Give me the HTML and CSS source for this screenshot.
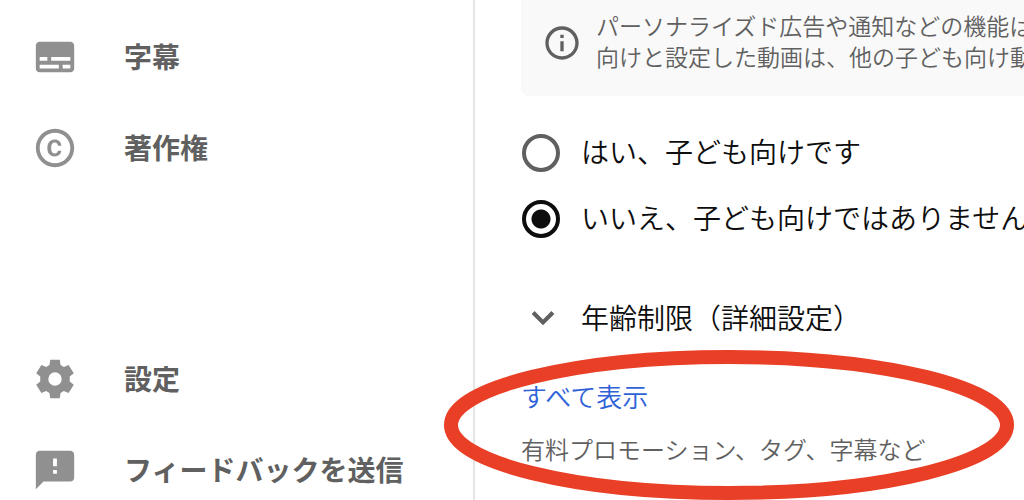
FILE: index.html
```html
<!DOCTYPE html>
<html lang="ja">
<head>
  <meta charset="UTF-8">
  <meta name="viewport" content="width=device-width, initial-scale=1">
  <title>動画の詳細</title>
  <link rel="stylesheet" href="styles.css">
</head>
<body>

  <!-- サイドメニュー -->
  <nav class="sidebar">
    <div class="menu">
      <a class="menu-item" href="#subtitles">
        <svg class="icon" viewBox="0 0 24 24"><path d="M20 4H4c-1.100 0-2 .9-2 2v12c0 1.100.9 2 2 2h16c1.100 0 2-.9 2-2V6c0-1.100-.9-2-2-2zM4 12h4v2H4v-2zm10 6H4v-2h10v2zm6 0h-4v-2h4v2zm0-4H10v-2h10v2z"/></svg>
        <span>字幕</span>
      </a>
      <a class="menu-item" href="#copyright">
        <svg class="icon" viewBox="0 0 24 24"><path d="M10.080 10.860c.05-.33.16-.62.300-.87s.34-.46.590-.62c.24-.15.54-.22.910-.23.230.01.440.05.630.13.200.09.380.21.520.36s.25.33.340.53.130.42.140.64h1.790c-.02-.47-.11-.900-.280-1.290s-.400-.73-.700-1.010-.660-.500-1.080-.660-.880-.230-1.390-.230c-.650 0-1.220.11-1.700.34s-.880.53-1.200.92-.560.84-.710 1.360S8 11.290 8 11.870v.27c0 .58.08 1.120.230 1.640s.39.970.710 1.350.72.690 1.200.91 1.050.34 1.700.34c.47 0 .91-.08 1.320-.230s.77-.36 1.080-.630.56-.58.740-.940.29-.740.300-1.150h-1.790c-.01.210-.06.400-.150.580s-.21.33-.360.460-.32.230-.520.300c-.19.07-.39.09-.600.10-.360-.01-.660-.08-.890-.230-.250-.160-.450-.370-.590-.620s-.250-.550-.300-.880-.080-.670-.080-1v-.27c0-.350.030-.680.080-1.010zM12 2C6.480 2 2 6.480 2 12s4.480 10 10 10 10-4.480 10-10S17.520 2 12 2zm0 18c-4.410 0-8-3.590-8-8s3.590-8 8-8 8 3.590 8 8-3.590 8-8 8z"/></svg>
        <span>著作権</span>
      </a>
    </div>
    <div class="menu">
      <a class="menu-item" href="#settings">
        <svg class="icon" viewBox="0 0 24 24"><path fill-rule="evenodd" d="M9.500 2h5l.400 2.700 1.700 1 2.500-1 2.700 4.300-2.100 1.700v2.600l2.100 1.700-2.700 4.300-2.500-1-1.700 1-.400 2.700h-5l-.400-2.700-1.700-1-2.500 1L2.200 15l2.100-1.700v-2.600L2.200 9l2.700-4.300 2.500 1 1.700-1zM12 8.500a3.500 3.500 0 1 0 0 7 3.500 3.500 0 0 0 0-7z"/></svg>
        <span>設定</span>
      </a>
      <a class="menu-item" href="#feedback">
        <svg class="icon" viewBox="0 0 24 24"><path d="M20 2H4c-1.100 0-2 .9-2 2v18l4-4h14c1.100 0 2-.9 2-2V4c0-1.100-.9-2-2-2zm-7 12h-2v-2h2v2zm0-4h-2V6h2v4z"/></svg>
        <span>フィードバックを送信</span>
      </a>
    </div>
  </nav>

  <!-- 視聴者の設定 -->
  <main class="content">
    <div class="notice">
      <svg class="notice-icon" viewBox="0 0 24 24"><path d="M11 7h2v2h-2zm0 4h2v6h-2zm1-9C6.480 2 2 6.480 2 12s4.480 10 10 10 10-4.480 10-10S17.520 2 12 2zm0 18c-4.410 0-8-3.590-8-8s3.590-8 8-8 8 3.590 8 8-3.590 8-8 8z"/></svg>
      <p>パーソナライズド広告や通知などの機能は<br>向けと設定した動画は、他の子ども向け動</p>
    </div>

    <form class="audience">
      <label class="option"><input type="radio" name="kids" value="yes"><span>はい、子ども向けです</span></label>
      <label class="option"><input type="radio" name="kids" value="no" checked><span>いいえ、子ども向けではありません</span></label>
    </form>

    <button class="expander" type="button">
      <svg class="chevron" viewBox="0 0 24 24"><path d="M7.410 8.200 12 12.800l4.590-4.600L18.200 9.800 12 16 5.800 9.800z"/></svg>
      <span>年齢制限（詳細設定）</span>
    </button>

    <div class="more">
      <a class="more-link" href="#more">すべて表示</a>
      <p class="more-text">有料プロモーション、タグ、字幕など</p>
      <svg class="marker" viewBox="0 0 570 150"><ellipse cx="285" cy="75" rx="278" ry="68"/></svg>
    </div>
  </main>

</body>
</html>
```
FILE: styles.css
```css
* {
  box-sizing: border-box;
}

body {
  margin: 0;
  height: 100vh;
  display: flex;
  overflow: hidden;
  background: #fff;
  color: #0d0d0d;
  font-family: "Noto Sans CJK JP", sans-serif;
  font-size: 28px;
  line-height: 40px;
  white-space: nowrap;
}

p {
  margin: 0;
}

/* サイドメニュー */
.sidebar {
  flex: 0 0 475px;
  display: flex;
  flex-direction: column;
  justify-content: space-between;
  padding: 27px 0 0 32px;
  border-right: 2px solid #e5e5e5;
}

.menu {
  display: flex;
  flex-direction: column;
  gap: 31px;
}

.menu-item {
  display: flex;
  align-items: center;
  gap: 46px;
  height: 60px;
  color: #606060;
  font-weight: 700;
  text-decoration: none;
}

.menu-item span,
.option span,
.expander span {
  padding-bottom: 3px;
}

.icon {
  width: 46px;
  height: 46px;
  fill: #909090;
}

/* 本文 */
.content {
  flex: 1;
  min-width: 0;
  padding-left: 46px;
  font-weight: 350;
}

.notice {
  display: flex;
  align-items: center;
  gap: 14px;
  padding: 10px 0 20px 21px;
  border-radius: 0 0 0 8px;
  background: #f9f9f9;
  color: #606060;
  font-size: 23px;
  line-height: 31px;
}

.notice p {
  padding-bottom: 4px;
}

.notice-icon {
  flex: none;
  width: 40px;
  height: 40px;
  fill: #606060;
}

.audience {
  display: flex;
  flex-direction: column;
  gap: 23px;
  padding: 35px 0 56px;
}

.option {
  display: flex;
  align-items: center;
  gap: 20px;
}

.option input {
  appearance: none;
  flex: none;
  width: 38px;
  height: 38px;
  margin: 0 1px;
  border: 4px solid #606060;
  border-radius: 50%;
}

.option input:checked {
  border-color: #0d0d0d;
  background: radial-gradient(circle, #0d0d0d 9px, transparent 10px);
}

.expander {
  display: flex;
  align-items: center;
  gap: 16px;
  padding: 0;
  border: none;
  background: none;
  color: inherit;
  font: inherit;
}

.chevron {
  width: 44px;
  height: 44px;
  fill: #606060;
}

.more {
  position: relative;
  padding-top: 36px;
}

.more-link {
  display: block;
  color: #2f62d9;
  font-size: 26px;
  text-decoration: none;
}

.more-text {
  padding-top: 13px;
  color: #606060;
  font-size: 24px;
}

/* 手描きの赤い囲み */
.marker {
  position: absolute;
  top: 10px;
  left: -77px;
  width: 570px;
  height: 150px;
  fill: none;
  stroke: #e93f26;
  stroke-width: 14px;
  pointer-events: none;
}
```
